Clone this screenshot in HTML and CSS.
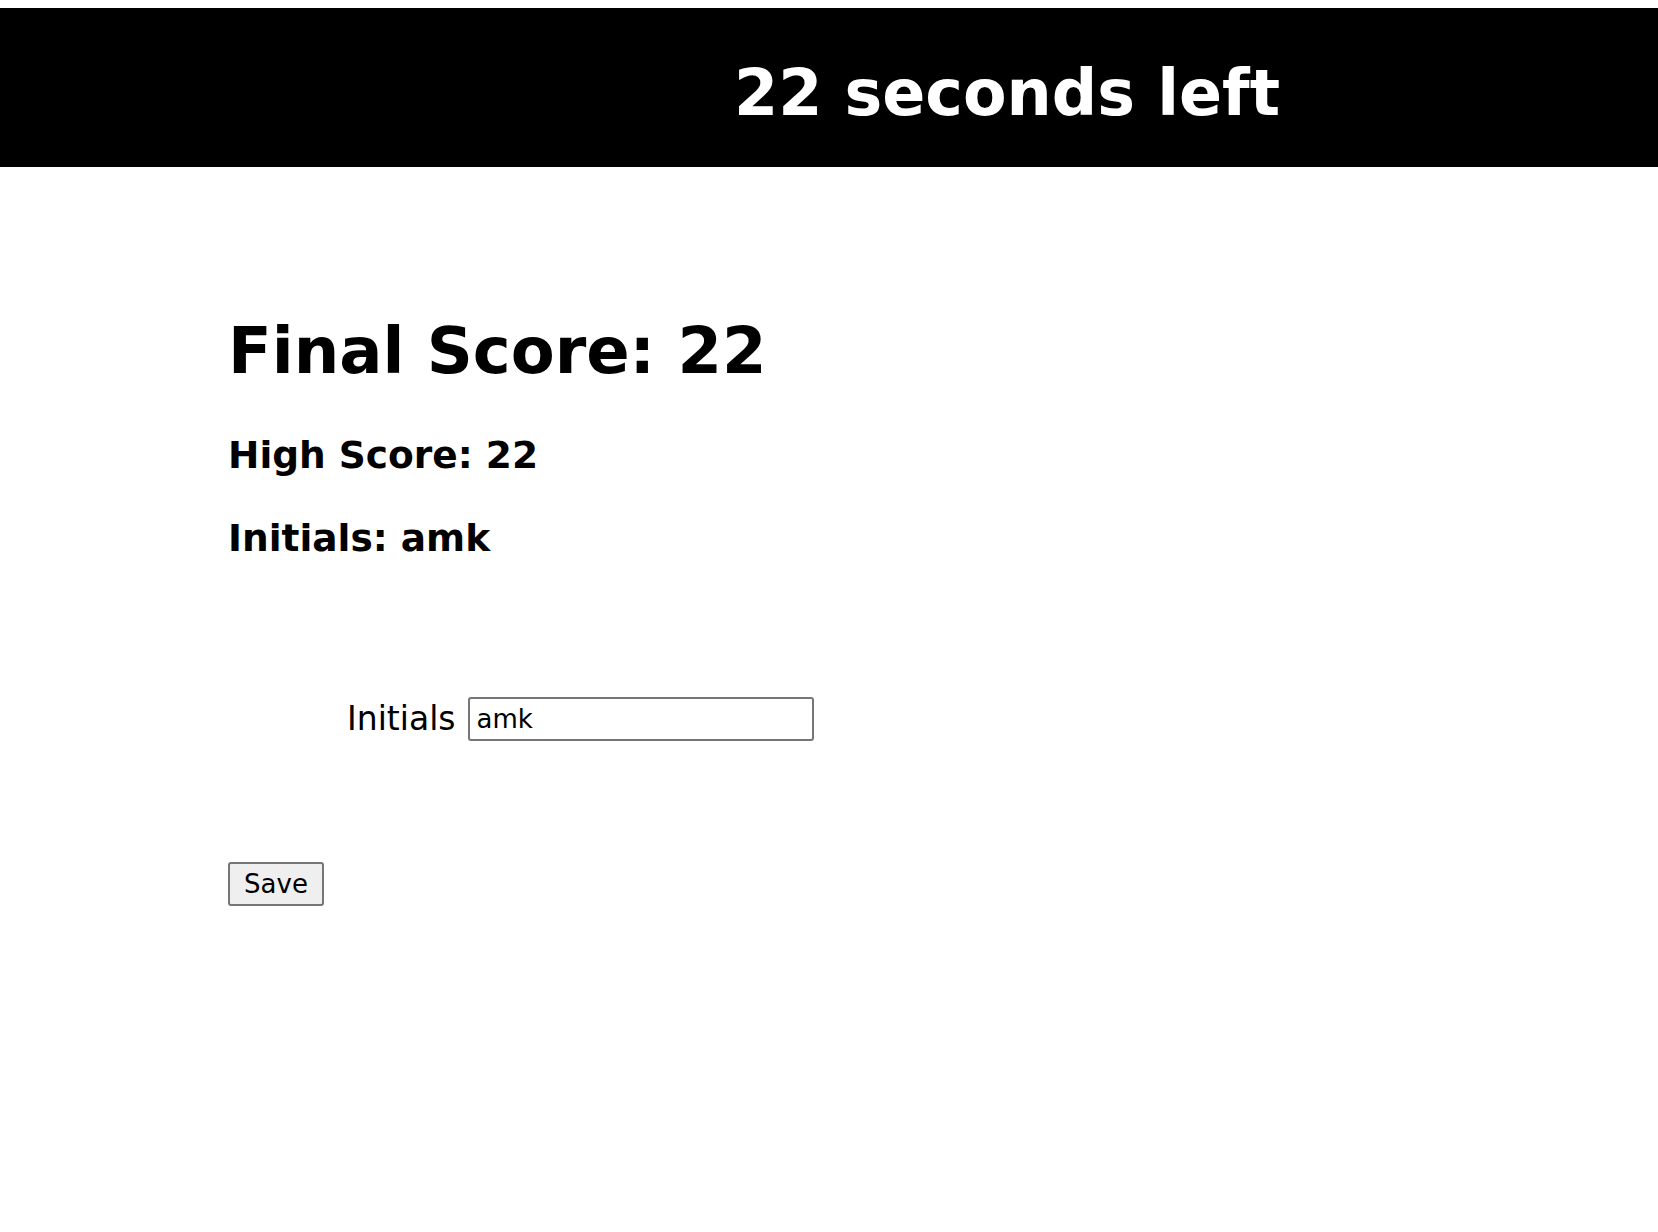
FILE: index.html
```html
<!DOCTYPE html>
<html lang="en">
<head>
<meta charset="utf-8">
<title>Quiz</title>
<link rel="stylesheet" href="styles.css">
</head>
<body>
<header class="timer-bar">
  <h1 class="timer">22 seconds left</h1>
</header>
<main class="results">
  <h1 class="final-score">Final Score: 22</h1>
  <h2 class="stat">High Score: 22</h2>
  <h2 class="stat stat-last">Initials: amk</h2>
  <form class="save-form">
    <div class="field-row">
      <label class="field-label" for="initials">Initials</label>
      <input class="field-input" id="initials" type="text" value="amk">
    </div>
    <button class="save-btn" type="button">Save</button>
  </form>
</main>
</body>
</html>
```

FILE: styles.css
```css
html, body {
  margin: 0;
  padding: 0;
  background: #ffffff;
  color: #000000;
  font-family: "DejaVu Sans", Verdana, sans-serif;
}

.timer-bar {
  margin-top: 8px;
  height: 159px;
  box-sizing: border-box;
  background: #000000;
  padding: 47px 0 0 734px;
}

.timer {
  margin: 0;
  color: #ffffff;
  font-size: 63.5px;
  font-weight: bold;
  line-height: 76px;
  white-space: nowrap;
}

.results {
  padding: 146px 0 0 228px;
}

.final-score {
  margin: 0 0 44px;
  font-size: 64px;
  font-weight: bold;
  line-height: 76px;
}

.stat {
  margin: 0 0 39px;
  font-size: 37.5px;
  font-weight: bold;
  line-height: 44px;
}

.stat-last {
  margin-bottom: 0;
}

.save-form {
  margin: 0;
}

.field-row {
  display: flex;
  align-items: center;
  gap: 12px;
  height: 44px;
  margin: 137px 0 0 119px;
}

.field-label {
  font-size: 33px;
  line-height: 44px;
}

.field-input {
  box-sizing: border-box;
  width: 346px;
  height: 44px;
  padding: 0 7px;
  margin: 0;
  border: 2px solid #767676;
  border-radius: 3px;
  background: #ffffff;
  font-family: "DejaVu Sans", Verdana, sans-serif;
  font-size: 26px;
  color: #000000;
}

.save-btn {
  display: block;
  box-sizing: border-box;
  width: 96px;
  height: 44px;
  margin: 121px 0 0;
  padding: 0;
  border: 2px solid #767676;
  border-radius: 3px;
  background: #efefef;
  font-family: "DejaVu Sans", Verdana, sans-serif;
  font-size: 26px;
  color: #000000;
}
```
